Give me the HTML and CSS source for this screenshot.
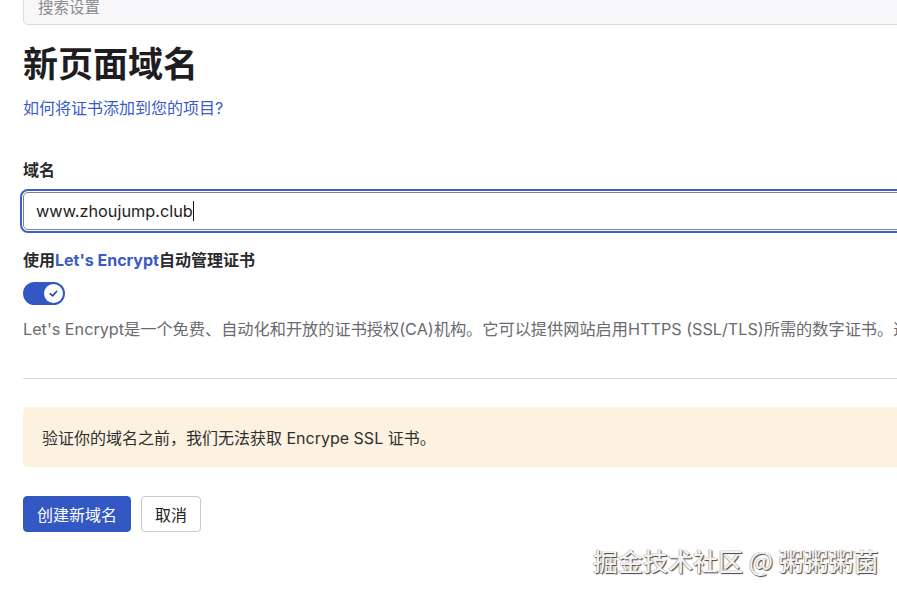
FILE: index.html
```html
<!DOCTYPE html>
<html lang="zh">
<head>
<meta charset="utf-8">
<link rel="stylesheet" href="styles.css">
</head>
<body>
<div class="page">
  <div class="search">搜索设置</div>
  <h1 class="title">新页面域名</h1>
  <a class="help" href="#">如何将证书添加到您的项目?</a>
  <div class="label">域名</div>
  <div class="input">www.zhoujump.club<span class="caret"></span></div>
  <div class="label label2">使用<span class="blue">Let's Encrypt</span>自动管理证书</div>
  <div class="toggle">
    <span class="knob">
      <svg width="11" height="11" viewBox="0 0 12 12"><path d="M2.5 6.3 L5 8.6 L9.5 3.6" fill="none" stroke="#2c4aa8" stroke-width="1.8" stroke-linecap="round" stroke-linejoin="round"/></svg>
    </span>
  </div>
  <p class="desc">Let's Encrypt是一个免费、自动化和开放的证书授权(CA)机构。它可以提供网站启用HTTPS (SSL/TLS)所需的数字证书。这样您的网站就可以安全地被访问。</p>
  <div class="rule"></div>
  <div class="warn">验证你的域名之前，我们无法获取 Encrype SSL 证书。</div>
  <div class="actions">
    <button class="btn primary">创建新域名</button>
    <button class="btn">取消</button>
  </div>
</div>
<div class="watermark">掘金技术社区 @ 粥粥粥菌</div>
</body>
</html>
```
FILE: styles.css
```css
html, body {
  margin: 0;
  padding: 0;
  overflow: hidden;
  background: #fff;
}
body {
  font-family: "Inter", "Noto Sans CJK SC", sans-serif;
  color: #1f2328;
  width: 897px;
  height: 593px;
  position: relative;
}
.page {
  padding-left: 23px;
  width: 1100px;
  display: flex;
  flex-direction: column;
  align-items: flex-start;
}
.search {
  box-sizing: border-box;
  width: 1077px;
  height: 37px;
  margin-top: -12px;
  padding: 9px 14px 0;
  background: #f8f8fa;
  border: 1px solid #dcdce0;
  border-radius: 5px;
  color: #8a8a90;
  font-size: 15.5px;
  line-height: 20px;
}
.title {
  margin: 19px 0 0;
  font-size: 35px;
  line-height: 40px;
  font-weight: 700;
  color: #1e1e22;
}
.help {
  margin-top: 14px;
  font-size: 16px;
  line-height: 20px;
  color: #3a5bc7;
  text-decoration: none;
}
.label {
  margin-top: 42px;
  font-size: 16px;
  line-height: 20px;
  font-weight: 700;
  color: #2a2a2e;
}
.label2 { margin-top: 20px; }
.blue { color: #3a5bc7; }
.input {
  box-sizing: border-box;
  margin-top: 12px;
  width: 1077px;
  height: 38px;
  border: 1px solid #7c8294;
  border-radius: 5px;
  outline: 2px solid #3d5fcb;
  outline-offset: 1px;
  padding-left: 12px;
  font-size: 16.3px;
  line-height: 36px;
  color: #1e1e22;
}
.caret {
  display: inline-block;
  width: 1px;
  height: 20px;
  background: #111;
  vertical-align: -4px;
}
.toggle {
  margin-top: 12px;
  width: 42px;
  height: 23px;
  border-radius: 12px;
  background: #3358c4;
  display: flex;
  align-items: center;
  justify-content: flex-end;
  padding-right: 2px;
  box-sizing: border-box;
}
.knob {
  width: 19px;
  height: 19px;
  border-radius: 50%;
  background: #fff;
  display: flex;
  align-items: center;
  justify-content: center;
}
.desc {
  margin: 13px 0 0;
  font-size: 16.2px;
  line-height: 22px;
  color: #6a6a70;
  white-space: nowrap;
}
.rule {
  margin-top: 38px;
  width: 1077px;
  height: 1px;
  background: #dadada;
}
.warn {
  box-sizing: border-box;
  margin-top: 28px;
  width: 1077px;
  height: 60px;
  padding-left: 19px;
  display: flex;
  align-items: center;
  background: #fcf2df;
  border-radius: 5px;
  font-size: 16px;
  color: #2f2f33;
}
.actions {
  margin-top: 29px;
  display: flex;
  gap: 10px;
}
.btn {
  box-sizing: border-box;
  height: 36px;
  padding: 0 13px;
  border: 1px solid #c9c9cc;
  border-radius: 4px;
  background: #fff;
  font-family: "Inter", "Noto Sans CJK SC", sans-serif;
  font-size: 16px;
  color: #222;
}
.primary {
  width: 108px;
  background: #3358c4;
  border-color: #3358c4;
  color: #fff;
}
.watermark {
  position: absolute;
  left: 593px;
  top: 544px;
  font-family: "Noto Sans CJK SC", sans-serif;
  font-size: 25px;
  font-weight: 500;
  line-height: 32px;
  color: #f2f2f2;
  text-shadow: 1px 1px 1px #444, -0.5px -0.5px 0 #999;
  white-space: nowrap;
}
```
